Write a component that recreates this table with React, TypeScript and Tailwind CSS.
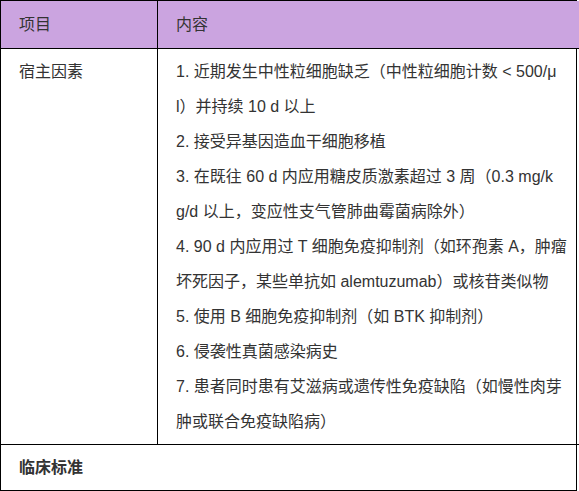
const items: string[][] = [
  ["1. 近期发生中性粒细胞缺乏（中性粒细胞计数 < 500/μ", "l）并持续 10 d 以上"],
  ["2. 接受异基因造血干细胞移植"],
  ["3. 在既往 60 d 内应用糖皮质激素超过 3 周（0.3 mg/k", "g/d 以上，变应性支气管肺曲霉菌病除外）"],
  ["4. 90 d 内应用过 T 细胞免疫抑制剂（如环孢素 A，肿瘤", "坏死因子，某些单抗如 alemtuzumab）或核苷类似物"],
  ["5. 使用 B 细胞免疫抑制剂（如 BTK 抑制剂）"],
  ["6. 侵袭性真菌感染病史"],
  ["7. 患者同时患有艾滋病或遗传性免疫缺陷（如慢性肉芽", "肿或联合免疫缺陷病）"],
];

export default function App() {
  return (
    <div
      className="w-[577px] bg-white text-[16px] text-[#333333]"
      style={{ fontFamily: '"Liberation Sans", "Noto Sans CJK SC", sans-serif' }}
    >
      <div className="grid grid-cols-[157px_1fr] border border-black">
        {/* header */}
        <div className="flex h-[48px] items-center border-r border-b border-black bg-[#cba4e0] pl-[18px]">
          项目
        </div>
        <div className="flex h-[48px] items-center border-b border-black bg-[#cba4e0] pl-[18px]">
          内容
        </div>

        {/* 宿主因素 */}
        <div className="border-r border-b border-black py-[5px] pl-[18px] leading-[35px]">宿主因素</div>
        <div className="border-b border-black py-[5px] px-[18px] leading-[35px] whitespace-nowrap">
          {items.map((lines, i) => (
            <div key={i}>
              {lines.map((l, j) => (
                <div key={j}>{l}</div>
              ))}
            </div>
          ))}
        </div>

        {/* 临床标准 */}
        <div className="col-span-2 flex h-[45px] items-center pl-[18px] font-bold">临床标准</div>
      </div>
    </div>
  );
}
